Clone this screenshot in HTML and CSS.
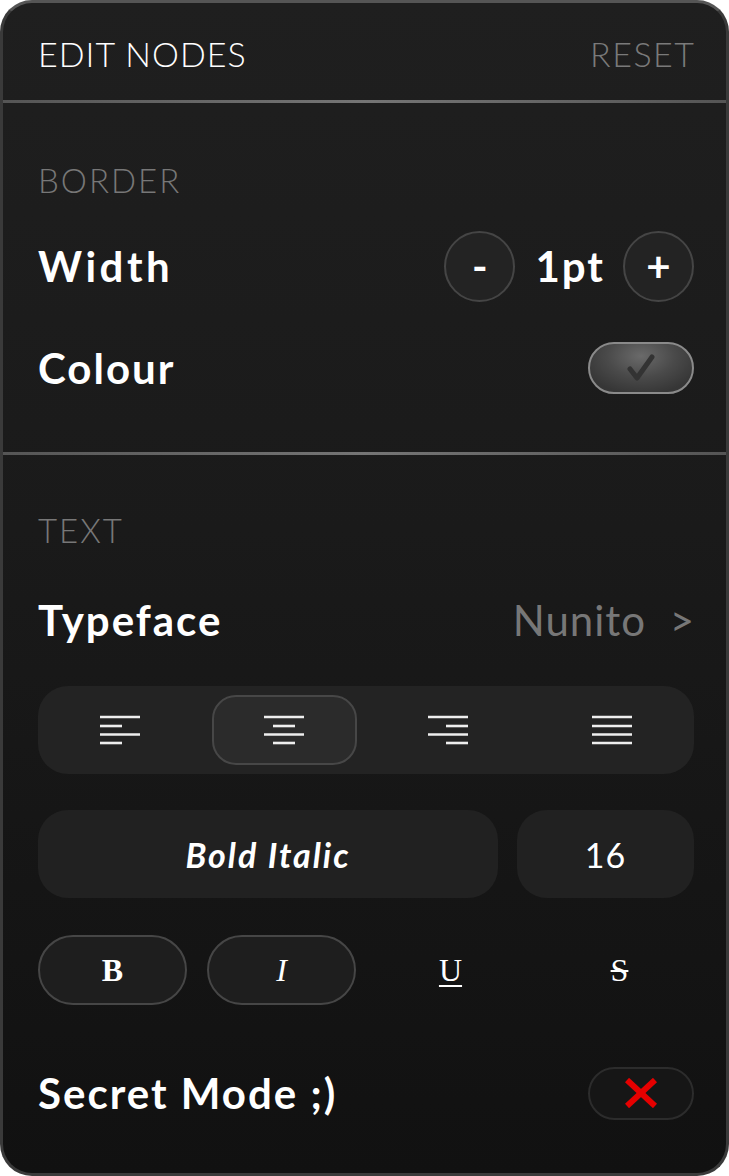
FILE: index.html
```html
<!DOCTYPE html>
<html>
<head>
<meta charset="utf-8">
<link rel="stylesheet" href="styles.css">
</head>
<body>
<div class="panel">
  <header class="header">
    <span class="title">EDIT NODES</span>
    <span class="reset">RESET</span>
  </header>
  <div class="sep"></div>
  <section class="section border-section">
    <div class="label">BORDER</div>
    <div class="row width-row">
      <span class="row-title">Width</span>
      <div class="stepper">
        <span class="circle-btn">-</span>
        <span class="value">1pt</span>
        <span class="circle-btn">+</span>
      </div>
    </div>
    <div class="row colour-row">
      <span class="row-title">Colour</span>
      <span class="toggle-on">
        <svg width="30" height="28" viewBox="0 0 30 28"><path d="M4 15 L11 24 L26 3" fill="none" stroke="#333" stroke-width="5" stroke-linecap="round" stroke-linejoin="round"/></svg>
      </span>
    </div>
  </section>
  <div class="sep"></div>
  <section class="section text-section">
    <div class="label">TEXT</div>
    <div class="row typeface-row">
      <span class="row-title">Typeface</span>
      <span class="typeface-value">Nunito &nbsp;&gt;</span>
    </div>
    <div class="align-group">
      <div class="align-item">
        <svg width="40" height="30" viewBox="0 0 40 30"><g stroke="#eee" stroke-width="2.6"><line x1="0" y1="2" x2="40" y2="2"/><line x1="0" y1="11" x2="22" y2="11"/><line x1="0" y1="19.5" x2="40" y2="19.5"/><line x1="0" y1="28" x2="22" y2="28"/></g></svg>
      </div>
      <div class="align-item selected">
        <svg width="40" height="30" viewBox="0 0 40 30"><g stroke="#eee" stroke-width="2.6"><line x1="0" y1="2" x2="40" y2="2"/><line x1="9" y1="11" x2="31" y2="11"/><line x1="0" y1="19.5" x2="40" y2="19.5"/><line x1="9" y1="28" x2="31" y2="28"/></g></svg>
      </div>
      <div class="align-item">
        <svg width="40" height="30" viewBox="0 0 40 30"><g stroke="#eee" stroke-width="2.6"><line x1="0" y1="2" x2="40" y2="2"/><line x1="18" y1="11" x2="40" y2="11"/><line x1="0" y1="19.5" x2="40" y2="19.5"/><line x1="18" y1="28" x2="40" y2="28"/></g></svg>
      </div>
      <div class="align-item">
        <svg width="40" height="30" viewBox="0 0 40 30"><g stroke="#eee" stroke-width="2.6"><line x1="0" y1="2" x2="40" y2="2"/><line x1="0" y1="11" x2="40" y2="11"/><line x1="0" y1="19.5" x2="40" y2="19.5"/><line x1="0" y1="28" x2="40" y2="28"/></g></svg>
      </div>
    </div>
    <div class="style-row">
      <div class="box style-box">Bold Italic</div>
      <div class="box size-box">16</div>
    </div>
    <div class="format-row">
      <span class="fmt pill fmt-b">B</span>
      <span class="fmt pill fmt-i">I</span>
      <span class="fmt fmt-u">U</span>
      <span class="fmt fmt-s">S</span>
    </div>
    <div class="row secret-row">
      <span class="row-title secret">Secret Mode ;)</span>
      <span class="toggle-off">
        <svg width="32" height="30" viewBox="0 0 32 30"><g stroke="#e60000" stroke-width="6"><line x1="2" y1="2" x2="30" y2="28"/><line x1="30" y1="2" x2="2" y2="28"/></g></svg>
      </span>
    </div>
  </section>
</div>
</body>
</html>
```
FILE: styles.css
```css
html, body {
  margin: 0;
  padding: 0;
  background: #ffffff;
}
body {
  font-family: "Lato", "Noto Sans", sans-serif;
  color: #ffffff;
}
.panel {
  box-sizing: border-box;
  width: 729px;
  height: 1176px;
  border: 3px solid #3a3a3a;
  border-top-color: #555;
  border-radius: 32px;
  background: linear-gradient(180deg, #1f1f1f 0%, #1a1a1a 45%, #111111 100%);
  overflow: hidden;
  display: flex;
  flex-direction: column;
}
.header {
  height: 97px;
  display: flex;
  align-items: center;
  justify-content: space-between;
  padding: 3px 32px 0 35px;
  box-sizing: border-box;
  font-size: 34px;
  font-weight: 300;
}
.title { color: #fff; letter-spacing: 1px; }
.reset { color: #7a7a7a; letter-spacing: 1.5px; margin-right: -1.5px; }
.sep {
  height: 3px;
  background: linear-gradient(90deg, #555 0%, #757575 50%, #555 100%);
  flex: none;
}
.section {
  padding: 0 32px 0 35px;
  display: flex;
  flex-direction: column;
}
.border-section {
  height: 349px;
  box-sizing: border-box;
  padding-top: 57px;
}
.text-section {
  padding-top: 55px;
  flex: 1;
}
.label {
  height: 40px;
  line-height: 40px;
  font-size: 33px;
  font-weight: 300;
  color: #777;
  letter-spacing: 2px;
}
.row {
  display: flex;
  align-items: center;
  justify-content: space-between;
}
.row-title {
  font-size: 42px;
  font-weight: 700;
  letter-spacing: 2px;
}
.width-row .row-title { letter-spacing: 3.5px; }
.width-row {
  height: 70px;
  margin-top: 31px;
}
.stepper {
  display: flex;
  align-items: center;
  gap: 20px;
}
.circle-btn {
  box-sizing: border-box;
  width: 71px;
  height: 71px;
  border-radius: 50%;
  border: 2px solid #454545;
  background: #232323;
  display: flex;
  align-items: center;
  justify-content: center;
  font-size: 42px;
  font-weight: 700;
}
.value {
  font-size: 42px;
  font-weight: 700;
  letter-spacing: 2px;
  margin-right: -2px;
}
.colour-row {
  height: 52px;
  margin-top: 41px;
}
.toggle-on {
  box-sizing: border-box;
  width: 106px;
  height: 52px;
  border-radius: 26px;
  border: 2px solid #8a8a8a;
  background: radial-gradient(ellipse 60% 80% at 50% 25%, #6a6a6a 0%, #4a4a4a 55%, #363636 100%);
  display: flex;
  align-items: center;
  justify-content: center;
}
.typeface-row {
  height: 50px;
  margin-top: 45px;
}
.typeface-value {
  font-size: 42px;
  font-weight: 400;
  color: #777;
  letter-spacing: 1px;
  margin-right: -1px;
}
.align-group {
  margin-top: 41px;
  height: 88px;
  border-radius: 30px;
  background: #232323;
  display: grid;
  grid-template-columns: repeat(4, 1fr);
  align-items: center;
  justify-items: center;
}
.align-item {
  box-sizing: border-box;
  width: 145px;
  height: 70px;
  border-radius: 24px;
  display: flex;
  align-items: center;
  justify-content: center;
}
.align-item.selected {
  background: #2b2b2b;
  border: 2px solid #474747;
}
.style-row {
  margin-top: 36px;
  display: flex;
  gap: 19px;
}
.box {
  height: 88px;
  border-radius: 30px;
  background: #212121;
  display: flex;
  align-items: center;
  justify-content: center;
  font-size: 34px;
}
.style-box {
  width: 460px;
  font-weight: 700;
  font-style: italic;
  letter-spacing: 2px;
}
.size-box {
  flex: 1;
  font-weight: 400;
  letter-spacing: 1px;
}
.format-row {
  margin-top: 37px;
  display: grid;
  grid-template-columns: repeat(4, 1fr);
  gap: 20px;
  height: 70px;
}
.fmt {
  display: flex;
  align-items: center;
  justify-content: center;
  font-family: "Liberation Serif", "DejaVu Serif", serif;
  font-size: 32px;
  color: #fff;
}
.pill {
  box-sizing: border-box;
  border: 2px solid #464646;
  background: #1e1e1e;
  border-radius: 35px;
}
.fmt-b { font-weight: 700; }
.fmt-i { font-style: italic; }
.fmt-u { text-decoration: underline; text-underline-offset: 4px; text-decoration-thickness: 2px; }
.fmt-s { text-decoration: line-through; text-decoration-thickness: 2px; }
.secret-row {
  margin-top: 62px;
  height: 52px;
}
.toggle-off {
  box-sizing: border-box;
  width: 106px;
  height: 53px;
  border-radius: 27px;
  border: 2px solid #2c2c2c;
  background: #161616;
  display: flex;
  align-items: center;
  justify-content: center;
}
```
